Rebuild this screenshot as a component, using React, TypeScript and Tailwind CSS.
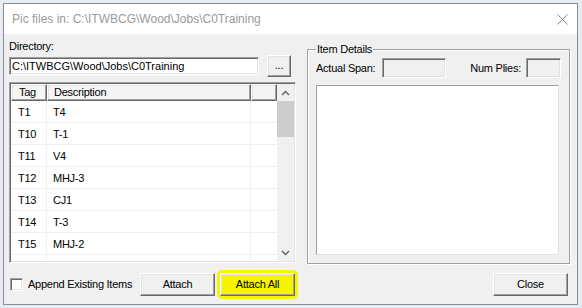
import React from 'react';

const rows = [
  { tag: 'T1', desc: 'T4' },
  { tag: 'T10', desc: 'T-1' },
  { tag: 'T11', desc: 'V4' },
  { tag: 'T12', desc: 'MHJ-3' },
  { tag: 'T13', desc: 'CJ1' },
  { tag: 'T14', desc: 'T-3' },
  { tag: 'T15', desc: 'MHJ-2' },
  { tag: '', desc: '' },
];

const sunken =
  'border border-t-[#a0a0a0] border-l-[#a0a0a0] border-r-white border-b-white shadow-[inset_1px_1px_0_#696969,inset_-1px_-1px_0_#e3e3e3]';
const raised =
  'border border-t-white border-l-white border-r-[#696969] border-b-[#696969] shadow-[inset_-1px_-1px_0_#a0a0a0,inset_1px_1px_0_#e3e3e3]';

const Button = ({ label, className = '' }: { label: string; className?: string }) => (
  <button className={`${raised} shrink-0 flex items-center justify-center text-black ${className}`}>
    {label}
  </button>
);

const Chevron = ({ up }: { up?: boolean }) => (
  <svg width="9" height="6" viewBox="0 0 9 6">
    <path d={up ? 'M1 5 L4.5 1.5 L8 5' : 'M1 1 L4.5 4.5 L8 1'} fill="none" stroke="#606060" strokeWidth="1.4" />
  </svg>
);

export default function App() {
  return (
    <div className="relative w-[582px] h-[308px] overflow-hidden bg-[#e6ecf3] font-['Liberation_Sans',Arial,sans-serif] text-[11px] tracking-[-0.25px] text-black">
      {/* dialog window */}
      <div className="absolute left-[3px] top-[3px] w-[575px] h-[302px] border border-[#8c8c8c] bg-[#f0f0f0] flex flex-col">
        {/* title bar */}
        <div className="h-[30px] bg-white flex items-center justify-between pl-[8px] pr-[8px] shrink-0">
          <span className="text-[12px] tracking-normal text-[#9a9a9a]">Pic files in: C:\ITWBCG\Wood\Jobs\C0Training</span>
          <svg width="11" height="11" viewBox="0 0 11 11" className="mr-[1px]">
            <path d="M0.5 0.5 L10.5 10.5 M10.5 0.5 L0.5 10.5" stroke="#8a8a8a" strokeWidth="1" />
          </svg>
        </div>

        <div className="flex pl-[5px]">
          {/* left column */}
          <div className="w-[287px] flex flex-col">
            <div className="mt-[6px] h-[13px] leading-[13px]">Directory:</div>
            <div className="mt-[2px] h-[22px] flex items-center">
              <div className={`${sunken} w-[250px] h-[18px] shrink-0 bg-white flex items-center pl-[2px] leading-[13px] tracking-normal`}>
                C:\ITWBCG\Wood\Jobs\C0Training
              </div>
              <Button label="..." className="ml-[8px] w-[24px] h-[22px] bg-[#f0f0f0] pb-[2px]" />
            </div>

            {/* list view */}
            <div className={`${sunken} mt-[5px] h-[181px] bg-white flex overflow-hidden`}>
              <div className="flex-1 flex flex-col pl-[1px] pt-[1px]">
                <div className="flex h-[17px] shrink-0 bg-[#f5f5f5]">
                  <div className={`${raised} w-[36px] pl-[7px] leading-[15px]`}>Tag</div>
                  <div className={`${raised} w-[204px] pl-[6px] leading-[15px]`}>Description</div>
                  <div className={`${raised} flex-1`} />
                </div>
                {rows.map((r, i) => (
                  <div key={i} className="flex h-[22px] shrink-0 border-b border-[#f0f0f0]">
                    <div className="w-[36px] pl-[7px] pt-[1px] flex items-center border-r border-[#f0f0f0]">{r.tag}</div>
                    <div className="w-[204px] pl-[6px] pt-[1px] flex items-center border-r border-[#f0f0f0]">{r.desc}</div>
                    <div className="flex-1" />
                  </div>
                ))}
              </div>
              {/* scrollbar */}
              <div className="w-[17px] bg-[#f0f0f0] flex flex-col mt-[1px] mb-[1px] mr-[1px]">
                <div className="h-[17px] flex items-center justify-center">
                  <Chevron up />
                </div>
                <div className="h-[36px] bg-[#cdcdcd]" />
                <div className="flex-1" />
                <div className="h-[17px] flex items-center justify-center">
                  <Chevron />
                </div>
              </div>
            </div>
          </div>

          {/* item details group */}
          <fieldset className="ml-[11px] mt-[9px] w-[263px] h-[221px] border border-[#a0a0a0] shadow-[inset_1px_1px_0_#fff,1px_1px_0_#fff] pl-[8px] pr-[8px]">
            <legend className="px-[1px] leading-[13px]">Item Details</legend>
            <div className="mt-[2px] h-[20px] flex items-center">
              <span>Actual Span:</span>
              <div className={`${sunken} ml-[7px] w-[64px] h-[20px] bg-[#f0f0f0]`} />
              <span className="ml-auto">Num Plies:</span>
              <div className={`${sunken} ml-[5px] w-[35px] h-[20px] bg-[#f0f0f0]`} />
            </div>
            <div className="mt-[7px] w-[243px] h-[170px] bg-white border border-t-[#a0a0a0] border-l-[#a0a0a0] border-r-[#e3e3e3] border-b-[#e3e3e3]" />
          </fieldset>
        </div>

        {/* bottom row */}
        <div className="mt-[9px] flex items-center pl-[5px] pr-[9px]">
          <div className="w-[287px] flex items-center">
            <div className={`${sunken} ml-[1px] w-[13px] h-[13px] shrink-0 bg-white`} />
            <span className="ml-[5px] whitespace-nowrap">Append Existing Items</span>
            <Button label="Attach" className="ml-auto w-[75px] h-[23px] bg-[#f0f0f0]" />
            <div className="ml-[2px] -my-[3px] -mr-[2px] px-[3px] py-[3px] bg-[#f5f500] rounded-[5px]">
              <Button label="Attach All" className="w-[75px] h-[23px] bg-[#f5f500]" />
            </div>
          </div>
          <Button label="Close" className="ml-auto w-[75px] h-[23px] bg-[#f0f0f0]" />
        </div>
      </div>
    </div>
  );
}
